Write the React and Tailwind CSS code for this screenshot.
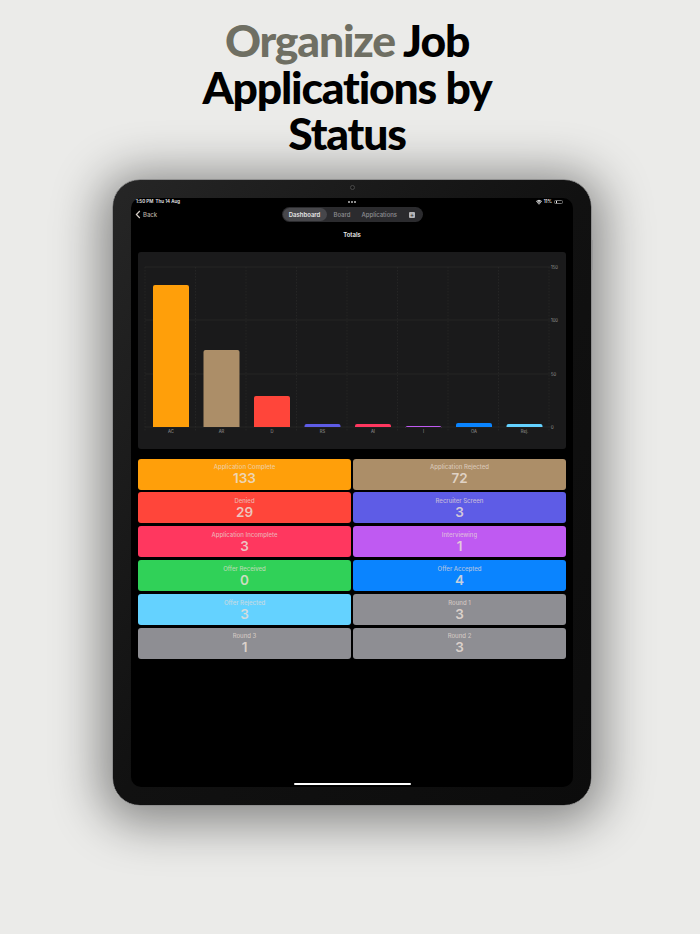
import React from 'react';
import { Wifi } from 'lucide-react';

const bars = [
  { label: 'AC', top: 285, color: '#ff9f0a' },
  { label: 'AR', top: 350, color: '#ac8e68' },
  { label: 'D', top: 396, color: '#ff453a' },
  { label: 'RS', top: 424, color: '#5e5ce6' },
  { label: 'AI', top: 424, color: '#ff375f' },
  { label: 'I', top: 426, color: '#bf5af2' },
  { label: 'OA', top: 423, color: '#0a84ff' },
  { label: 'Rej.', top: 424, color: '#64d2ff' },
];

const cards = [
  { title: 'Application Complete', value: 133, color: 'bg-[#ff9f0a]' },
  { title: 'Application Rejected', value: 72, color: 'bg-[#ac8e68]' },
  { title: 'Denied', value: 29, color: 'bg-[#ff453a]' },
  { title: 'Recruiter Screen', value: 3, color: 'bg-[#5e5ce6]' },
  { title: 'Application Incomplete', value: 3, color: 'bg-[#ff375f]' },
  { title: 'Interviewing', value: 1, color: 'bg-[#bf5af2]' },
  { title: 'Offer Received', value: 0, color: 'bg-[#30d158]' },
  { title: 'Offer Accepted', value: 4, color: 'bg-[#0a84ff]' },
  { title: 'Offer Rejected', value: 3, color: 'bg-[#64d2ff]' },
  { title: 'Round 1', value: 3, color: 'bg-[#8e8e93]' },
  { title: 'Round 3', value: 1, color: 'bg-[#8e8e93]' },
  { title: 'Round 2', value: 3, color: 'bg-[#8e8e93]' },
];

const Chart = () => {
  // coordinates are relative to the chart panel, which starts at 138,252
  const base = 175;
  const ticks = [
    { y: 15, label: '150' },
    { y: 68, label: '100' },
    { y: 122, label: '50' },
    { y: base, label: '0' },
  ];

  return (
    <svg viewBox="0 0 428 197" className="block w-[428px] h-[197px]">
      {ticks.map((t) => (
        <line key={t.y} x1="7" x2="414" y1={t.y} y2={t.y} stroke="#2e2e2e" strokeWidth="0.6" />
      ))}
      {[7, 57.5, 108, 158.5, 209, 259.5, 310, 360.5, 411].map((x) => (
        <line key={x} x1={x} x2={x} y1="15" y2="180" stroke="#2e2e2e" strokeWidth="0.6" strokeDasharray="1.5 1.5" />
      ))}
      {bars.map((b, i) => (
        <g key={b.label}>
          <path
            d={`M${15 + i * 50.5} ${base} V${b.top - 252 + 2} a2 2 0 0 1 2 -2 H${49 + i * 50.5} a2 2 0 0 1 2 2 V${base} Z`}
            fill={b.color}
          />
          <text x={33 + i * 50.5} y="181" textAnchor="middle" fontSize="4.2" fill="#9a9a9a" fontFamily="Inter, sans-serif">
            {b.label}
          </text>
        </g>
      ))}
      {ticks.map((t) => (
        <text key={t.label} x="413" y={t.y + 1.5} fontSize="4.2" fill="#9a9a9a" fontFamily="Inter, sans-serif">
          {t.label}
        </text>
      ))}
    </svg>
  );
};

const App = () => {
  return (
    <div className="w-[700px] h-[934px] overflow-hidden bg-[#ebebe9] font-['Lato',sans-serif]">
      <h1 className="pt-[17px] ml-[167px] w-[360px] text-center text-[44.5px] leading-[46.5px] font-black tracking-[-1.2px] text-black">
        <span className="text-[#6f6f63]">Organize</span> Job<br />Applications by<br />Status
      </h1>

      <div className="relative mt-[22px] ml-[112px] w-[480px] h-[627px] rounded-[28px] border border-[#8f8f8f] bg-linear-to-br from-[#262626] via-[#111111] to-[#0c0c0c] p-[18px] shadow-[0_6px_48px_12px_rgba(0,0,0,0.42)]">
        <div className="absolute left-[237px] top-[5px] w-[5px] h-[5px] rounded-full bg-[#161616] border border-[#4a4a4a]"></div>
        <div className="absolute -right-[2px] top-[60px] w-[1px] h-[30px] bg-[#9a9a9a]"></div>

        <div className="h-full rounded-[10px] bg-black flex flex-col font-['Inter',sans-serif] text-white">
          <div className="relative flex items-center justify-between h-[9px] pl-[5px] pr-[10px] text-[4.5px] font-semibold text-[#e8e8e8]">
            <span>1:50 PM&nbsp;&nbsp;Thu 14 Aug</span>
            <div className="absolute left-[217px] top-[3px] flex gap-[1px]">
              <span className="w-[2px] h-[2px] rounded-full bg-[#bbb]"></span>
              <span className="w-[2px] h-[2px] rounded-full bg-[#bbb]"></span>
              <span className="w-[2px] h-[2px] rounded-full bg-[#bbb]"></span>
            </div>
            <div className="flex items-center gap-[2px]">
              <Wifi size={6} strokeWidth={3.5} color="#fff" />
              <span>11%</span>
              <span className="w-[9px] h-[4.5px] rounded-[1.5px] border border-[#777] p-[0.5px]">
                <span className="block w-[1.5px] h-full bg-[#eee]"></span>
              </span>
            </div>
          </div>

          <div className="relative flex items-center justify-center h-[16px]">
            <div className="absolute left-[4px] top-[3px] flex items-center gap-[2px] text-[6px] leading-[9px] font-medium text-[#b9aea3]">
              <svg width="6" height="9" viewBox="0 0 6 9" fill="none" stroke="#d8d0c8" strokeWidth="1.2">
                <path d="M4.8 1 1.4 4.5 4.8 8" />
              </svg>
              <span>Back</span>
            </div>
            <div className="flex items-center w-[141px] h-[15px] rounded-full bg-[#2b2b2e] text-[6px] font-medium text-[#8f8f93]">
              <span className="ml-[1px] flex items-center justify-center w-[44px] h-[13px] rounded-full bg-[#47474b] font-semibold text-[#e6e6e6]">Dashboard</span>
              <span className="ml-[7px]">Board</span>
              <span className="ml-[11px]">Applications</span>
              <span className="ml-[12px] flex items-center justify-center w-[6px] h-[6px] rounded-[1px] bg-[#b5b5b8] text-[6px] leading-none text-[#2b2b2e]">+</span>
            </div>
          </div>

          <div className="mt-[7px] text-center text-[6px] leading-[9px] font-semibold text-[#eeeeee]">Totals</div>

          <div className="mt-[13px] mx-[7px] w-[428px] rounded-[3px] bg-[#1a1a1b] overflow-hidden">
            <Chart />
          </div>

          <div className="mt-[10px] mx-[7px] grid grid-cols-2 gap-x-[2px] gap-y-[2.9px]">
            {cards.map((c) => (
              <div key={c.title} className={`${c.color} h-[31px] pt-[1px] rounded-[3px] flex flex-col items-center justify-center text-[#eadfd6]/85`}>
                <span className="text-[6px] leading-[8px] font-medium opacity-85">{c.title}</span>
                <span className="text-[13.5px] leading-[15px] font-semibold">{c.value}</span>
              </div>
            ))}
          </div>

          <div className="mt-auto mb-[2px] mx-auto w-[117px] h-[2px] rounded-full bg-white"></div>
        </div>
      </div>
    </div>
  );
};

export default App;
